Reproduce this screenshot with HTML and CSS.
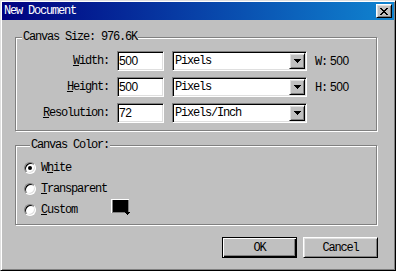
FILE: index.html
```html
<!DOCTYPE html>
<html lang="en">

<head>
  <meta charset="UTF-8">
  <title>New Document</title>
  <link rel="stylesheet" href="styles.css">
</head>

<body>
  <div class="window">
    <div class="titlebar">
      <span class="title">New Document</span>
      <span class="close raised">
        <svg width="8" height="7" viewBox="0 0 8 7" shape-rendering="crispEdges">
          <path d="M0 0h2v1h-2z M6 0h2v1h-2z M1 1h2v1h-2z M5 1h2v1h-2z M2 2h4v1h-4z M3 3h2v1h-2z M2 4h4v1h-4z M1 5h2v1h-2z M5 5h2v1h-2z M0 6h2v1h-2z M6 6h2v1h-2z" fill="#000"/>
        </svg>
      </span>
    </div>

    <div class="content">
      <fieldset class="group size">
        <legend>Canvas Size: 976.6K</legend>
        <div class="rows">
          <label class="lbl" for="width"><u>W</u>idth:</label>
          <input class="field num" id="width" type="text" value="500">
          <div class="field combo"><span class="combo-text">Pixels</span><span class="drop raised"><svg width="7" height="4" viewBox="0 0 7 4" shape-rendering="crispEdges"><path d="M0 0h7v1h-7z M1 1h5v1h-5z M2 2h3v1h-3z M3 3h1v1h-1z" fill="#000"/></svg></span></div>
          <span class="unit">W:<span class="digits">500</span></span>

          <label class="lbl" for="height"><u>H</u>eight:</label>
          <input class="field num" id="height" type="text" value="500">
          <div class="field combo"><span class="combo-text">Pixels</span><span class="drop raised"><svg width="7" height="4" viewBox="0 0 7 4" shape-rendering="crispEdges"><path d="M0 0h7v1h-7z M1 1h5v1h-5z M2 2h3v1h-3z M3 3h1v1h-1z" fill="#000"/></svg></span></div>
          <span class="unit">H:<span class="digits">500</span></span>

          <label class="lbl" for="res"><u>R</u>esolution:</label>
          <input class="field num" id="res" type="text" value="72">
          <div class="field combo"><span class="combo-text">Pixels/Inch</span><span class="drop raised"><svg width="7" height="4" viewBox="0 0 7 4" shape-rendering="crispEdges"><path d="M0 0h7v1h-7z M1 1h5v1h-5z M2 2h3v1h-3z M3 3h1v1h-1z" fill="#000"/></svg></span></div>
          <span class="unit"></span>
        </div>
      </fieldset>

      <fieldset class="group color">
        <legend>Canvas Color:</legend>
        <div class="radio-row"><span class="radio on"></span><span>W<u>h</u>ite</span></div>
        <div class="radio-row"><span class="radio"></span><span><u>T</u>ransparent</span></div>
        <div class="radio-row"><span class="radio"></span><span><u>C</u>ustom</span>
          <svg class="swatch" width="20" height="16" viewBox="0 0 20 16" shape-rendering="crispEdges">
            <rect x="0" y="0" width="18" height="14" fill="#fff"/>
            <rect x="1" y="1" width="17" height="13" fill="#808080"/>
            <rect x="2" y="1" width="15" height="12" fill="#000"/>
            <path d="M14 13h5v1h-5z M15 14h3v1h-3z M16 15h1v1h-1z" fill="#000"/>
          </svg>
        </div>
      </fieldset>

      <div class="actions">
        <button class="btn default">OK</button>
        <button class="btn raised">Cancel</button>
      </div>
    </div>
  </div>
</body>

</html>
```

FILE: styles.css
```css
* {
  box-sizing: border-box;
}

body {
  margin: 0;
  font: 12px "Liberation Mono", monospace;
  letter-spacing: -1.2px;
  color: #000;
}

.window {
  width: 396px;
  height: 271px;
  padding: 1px;
  background: #c0c0c0;
  border: 1px solid;
  border-color: #dfdfdf #000 #000 #dfdfdf;
  box-shadow: inset 1px 1px #fff, inset -1px -1px #808080;
}

.raised {
  background: #c0c0c0;
  border: 1px solid;
  border-color: #fff #000 #000 #fff;
  box-shadow: inset 1px 1px #dfdfdf, inset -1px -1px #808080;
}

.titlebar {
  height: 18px;
  display: flex;
  align-items: center;
  justify-content: space-between;
  padding: 0 2px;
  color: #fff;
  background: linear-gradient(90deg, #000080, #1084d0);
}

.close {
  width: 16px;
  height: 14px;
  display: flex;
  align-items: center;
  justify-content: center;
}

.content {
  padding: 11px 17px 0 13px;
}

.group {
  margin: 0;
  padding: 0 0 7px;
  min-width: 0;
  border: 1px solid #808080;
  box-shadow: 1px 1px #fff, inset 1px 1px #fff;
}

.group legend {
  margin-left: 6px;
  padding: 0 1px;
  line-height: 12px;
  background: #c0c0c0;
}

.rows {
  display: grid;
  grid-template-columns: 93px 47px 135px 1fr;
  column-gap: 8px;
  row-gap: 6px;
  align-items: center;
  padding-top: 8px;
}

.lbl {
  text-align: right;
}

.field {
  height: 20px;
  background: #fff;
  border: 1px solid;
  border-color: #808080 #fff #fff #808080;
  box-shadow: inset 1px 1px #000, inset -1px -1px #dfdfdf;
}

.num {
  width: 47px;
  margin: 0;
  padding: 0 1px;
  font: 12px "Liberation Sans", sans-serif;
  letter-spacing: -0.4px;
  color: #000;
  outline: none;
}

.combo {
  display: flex;
  align-items: center;
  padding: 1px;
}

.combo-text {
  flex: 1;
  padding-left: 1px;
}

.drop {
  width: 16px;
  height: 16px;
  display: flex;
  align-items: center;
  justify-content: center;
}

.digits {
  margin-left: 3px;
  font-family: "Liberation Sans", sans-serif;
  letter-spacing: -0.4px;
}

.color {
  margin-top: 8px;
  padding: 6px 0 4px 8px;
}

.radio-row {
  display: flex;
  align-items: center;
  height: 21px;
}

.radio {
  width: 12px;
  height: 12px;
  margin-right: 5px;
  display: flex;
  align-items: center;
  justify-content: center;
  border-radius: 50%;
  background: #fff;
  border: 1px solid;
  border-color: #808080 #fff #fff #808080;
  box-shadow: inset 1px 1px #000, inset -1px -1px #dfdfdf;
}

.radio.on::after {
  content: "";
  width: 4px;
  height: 4px;
  border-radius: 50%;
  background: #000;
}

.swatch {
  align-self: flex-start;
  margin-left: 34px;
}

.actions {
  display: flex;
  justify-content: flex-end;
  gap: 6px;
  margin: 12px -1px 0 0;
}

.btn {
  width: 75px;
  height: 21px;
  padding: 0;
  font: inherit;
  letter-spacing: inherit;
  color: #000;
}

.default {
  background: #c0c0c0;
  border: 1px solid #000;
  box-shadow: inset 1px 1px #fff, inset -1px -1px #000, inset -2px -2px #808080;
}
```
